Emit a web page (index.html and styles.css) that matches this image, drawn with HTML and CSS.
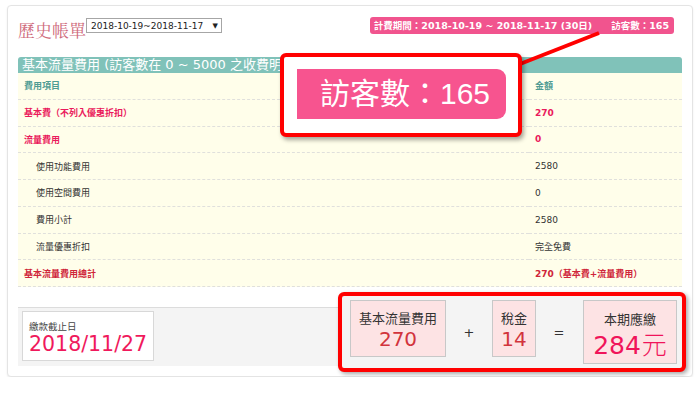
FILE: index.html
```html
<!DOCTYPE html>
<html lang="zh-Hant">
<head>
<meta charset="utf-8">
<title>歷史帳單</title>
<link rel="stylesheet" href="styles.css">
</head>
<body>
<div class="card">
  <div class="head">
    <div class="title-wrap">
      <h1 class="title">歷史帳單</h1>
      <span class="select">2018-10-19~2018-11-17<span class="arrow">▼</span></span>
    </div>
    <div class="badge"><span>計費期間：2018-10-19 ~ 2018-11-17 (30日)</span><span class="visits">訪客數：165</span></div>
  </div>

  <div class="section-title">基本流量費用 (訪客數在 0 ~ 5000 之收費明細)</div>
  <div class="fees">
    <div class="cell th">費用項目</div><div class="cell th">金額</div>
    <div class="cell em">基本費（不列入優惠折扣）</div><div class="cell em">270</div>
    <div class="cell em">流量費用</div><div class="cell em">0</div>
    <div class="cell sub">使用功能費用</div><div class="cell">2580</div>
    <div class="cell sub">使用空間費用</div><div class="cell">0</div>
    <div class="cell sub">費用小計</div><div class="cell">2580</div>
    <div class="cell sub">流量優惠折扣</div><div class="cell">完全免費</div>
    <div class="cell total">基本流量費用總計</div><div class="cell total">270（基本費+流量費用）</div>
  </div>

  <div class="footer">
    <div class="due">
      <div class="due-label">繳款截止日</div>
      <div class="due-date">2018/11/27</div>
    </div>
    <div class="sum">
      <div class="sum-box">
        <div class="sum-label">基本流量費用</div>
        <div class="sum-num">270</div>
      </div>
      <div class="op">+</div>
      <div class="sum-box tax">
        <div class="sum-label">稅金</div>
        <div class="sum-num">14</div>
      </div>
      <div class="op">=</div>
      <div class="sum-box grand">
        <div class="sum-label">本期應繳</div>
        <div class="grand-num">284<span class="unit">元</span></div>
      </div>
    </div>
  </div>

  <svg class="connector" viewBox="0 0 686 372" width="686" height="372" aria-hidden="true">
    <line x1="512" y1="58" x2="591" y2="27" stroke="#ff0000" stroke-width="4"/>
  </svg>
  <div class="callout">
    <div class="callout-pill">訪客數：165</div>
  </div>
</div>
</body>
</html>
```

FILE: styles.css
```css
html, body {
  margin: 0;
  padding: 0;
  background: #ffffff;
}

body {
  font-family: "DejaVu Sans", "Noto Sans CJK TC", sans-serif;
  color: #333333;
  padding: 5px 7px 0;
}

.card {
  position: relative;
  box-sizing: border-box;
  width: 686px;
  height: 372px;
  border: 1px solid #e4e4e4;
  border-radius: 4px;
  box-shadow: 0 1px 2px rgba(0, 0, 0, 0.08);
  padding: 11px 10px 0 10px;
  background: #ffffff;
}

/* ---------- header ---------- */
.head {
  display: flex;
  justify-content: space-between;
  align-items: flex-start;
  height: 40px;
  padding-right: 8px;
}

.title-wrap {
  display: flex;
  align-items: flex-start;
}

.title {
  margin: 3px 0 0 0;
  font-family: "Noto Serif CJK TC", "Noto Serif CJK SC", "Liberation Serif", serif;
  font-weight: normal;
  font-size: 17px;
  line-height: 20px;
  color: #cf6b7c;
}

.select {
  display: flex;
  align-items: center;
  box-sizing: border-box;
  height: 15px;
  margin-top: 1px;
  width: 136px;
  padding: 0 3px 0 4px;
  border: 1px solid #a6a6a6;
  background: #ffffff;
  font-size: 9px;
  color: #222222;
  white-space: nowrap;
}

.arrow {
  margin-left: auto;
  font-size: 7px;
}

.badge {
  display: flex;
  height: 17px;
  padding: 0 5px 0 4px;
  border-radius: 3px;
  background: #f1548e;
  color: #ffffff;
  font-weight: bold;
  font-size: 9.5px;
  line-height: 17px;
  white-space: nowrap;
}

.visits {
  margin-left: 19px;
}

/* ---------- fees table ---------- */
.section-title {
  height: 16px;
  padding-left: 4px;
  border-radius: 3px 3px 0 0;
  background: #80c2b9;
  color: #ffffff;
  font-size: 13px;
  line-height: 16px;
  white-space: nowrap;
  overflow: hidden;
}

.fees {
  display: grid;
  grid-template-columns: 511px 1fr;
  background: #fffeea;
}

.cell {
  box-sizing: border-box;
  height: 26.75px;
  display: flex;
  align-items: center;
  padding-left: 6px;
  border-bottom: 1px dashed #e0e0dc;
  font-size: 9px;
  color: #333333;
  white-space: nowrap;
}

.cell.th {
  color: #4f9c93;
  font-weight: bold;
}

.cell.em {
  color: #ea1a5c;
  font-weight: bold;
}

.cell.sub {
  padding-left: 18px;
}

.cell.total {
  color: #cf2539;
  font-weight: bold;
}

/* ---------- footer ---------- */
.footer {
  box-sizing: border-box;
  display: flex;
  align-items: flex-start;
  height: 59px;
  margin-top: 20px;
  padding: 3px 0 0 4px;
  border-top: 1px solid #dcdcdc;
  background: #f4f4f4;
}

.due {
  box-sizing: border-box;
  width: 132px;
  height: 50px;
  padding: 9px 0 0 6px;
  border: 1px solid #d8d8d8;
  background: #ffffff;
}

.due-label {
  font-size: 9.5px;
  line-height: 12px;
  color: #444444;
}

.due-date {
  font-size: 20.5px;
  line-height: 22px;
  color: #f0195c;
}

.sum {
  box-sizing: border-box;
  display: flex;
  align-items: flex-start;
  height: 80px;
  margin: -19px -4px 0 auto;
  padding: 4px 5px 0 8px;
  border: 4px solid #ff0000;
  border-radius: 6px;
  background: #f4f4f4;
  box-shadow: 2px 2px 4px rgba(0, 0, 0, 0.35);
}

.sum-box {
  box-sizing: border-box;
  width: 96px;
  height: 57px;
  padding-top: 10px;
  border: 1px solid #c8c8c8;
  background: #fde3e4;
  text-align: center;
}

.sum-box.tax {
  width: 44px;
}

.sum-box.grand {
  width: 94px;
  height: 64px;
  padding-top: 11px;
}

.sum-label {
  font-size: 13px;
  line-height: 16px;
  color: #333333;
  white-space: nowrap;
}

.sum-num {
  font-size: 20px;
  line-height: 25px;
  color: #d2343c;
}

.grand-num {
  font-size: 25px;
  line-height: 30px;
  color: #f0145a;
  white-space: nowrap;
}

.unit {
  margin-left: 1px;
  font-family: "Noto Sans CJK TC", sans-serif;
  font-weight: 300;
  font-size: 25px;
}

.op {
  box-sizing: border-box;
  width: 46px;
  padding-top: 25px;
  font-size: 13px;
  line-height: 16px;
  text-align: center;
  color: #333333;
}

.op + .sum-box.grand {
  margin-left: 1px;
}

/* ---------- annotation overlays ---------- */
.connector {
  position: absolute;
  left: 0;
  top: 0;
  pointer-events: none;
  overflow: visible;
}

.callout {
  position: absolute;
  left: 272px;
  top: 47px;
  box-sizing: border-box;
  width: 242px;
  height: 84px;
  padding: 12px 0 0 13px;
  border: 4px solid #ff0000;
  border-radius: 6px;
  background: #ffffff;
  box-shadow: 2px 3px 4px rgba(0, 0, 0, 0.35);
}

.callout-pill {
  box-sizing: border-box;
  width: 209px;
  height: 50px;
  padding-left: 23px;
  border-radius: 0 9px 9px 0;
  background: #f7548f;
  color: #ffffff;
  font-family: "Liberation Sans", "Noto Sans CJK TC", sans-serif;
  font-size: 30px;
  line-height: 50px;
  white-space: nowrap;
}
```
